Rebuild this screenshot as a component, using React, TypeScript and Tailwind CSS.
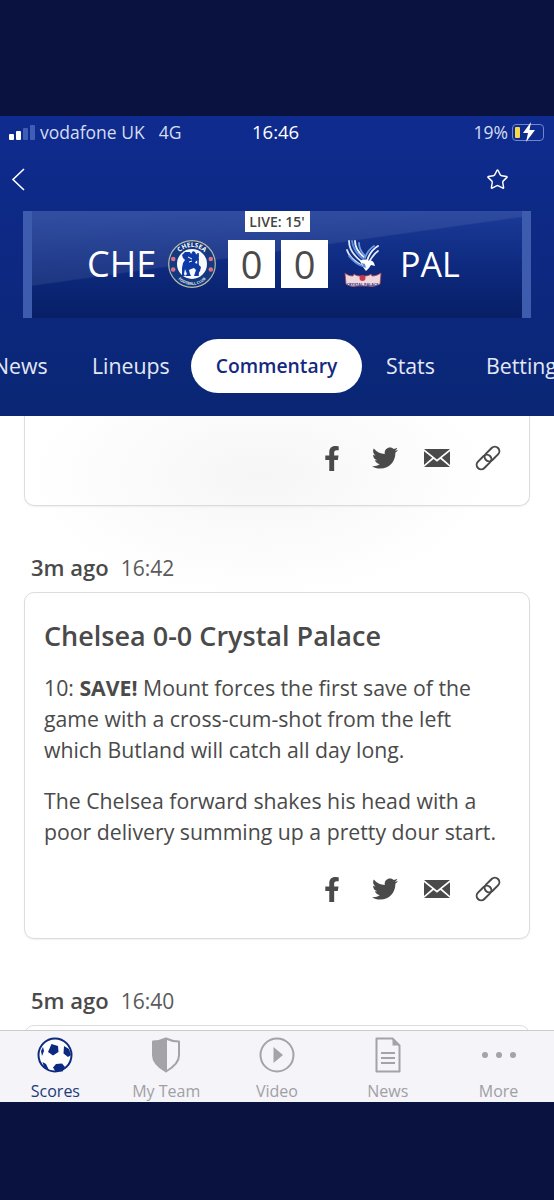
import { FaFacebookF, FaTwitter } from "react-icons/fa";
import { Star } from "lucide-react";

const sans = "font-['Open_Sans','Noto_Sans',sans-serif]";

function Share() {
  return (
    <div className="flex items-center justify-end gap-[25px] pr-[28px] text-[#4a4a4a]">
      <FaFacebookF className="w-[24px] h-[25px] mr-[3px]" />
      <FaTwitter className="w-[26px] h-[26px] mr-[1px]" />
      <svg width="26" height="18" viewBox="0 0 26 18" className="shrink-0">
        <path fill="currentColor" d="M0 0h26L13 10.500zM0 2.200V16l8.200-7.200zM26 2.200V16l-8.200-7.200zM9.600 10l3.400 2.800 3.400-2.800L26 18H0z" />
      </svg>
      <svg width="26" height="26" viewBox="0 0 26 26" className="shrink-0" fill="none" stroke="currentColor" strokeWidth="2">
        <rect x="-8.500" y="-4.500" width="17" height="9" rx="4.500" transform="translate(9 17) rotate(-45)" />
        <rect x="-8.500" y="-4.500" width="17" height="9" rx="4.500" transform="translate(17 9) rotate(-45)" />
      </svg>
    </div>
  );
}

function Chelsea() {
  return (
    <svg width="48" height="48" viewBox="0 0 48 48" className="shrink-0">
      <defs>
        <path id="che-top" d="M7 24a17 17 0 0 1 34 0" />
        <path id="che-bot" d="M5 26a19 19 0 0 0 38 0" />
      </defs>
      <circle cx="24" cy="24" r="23.300" fill="#15397f" stroke="#b9bba6" strokeWidth="1.200" />
      <circle cx="24" cy="24" r="15" fill="#f7f9fd" />
      <text fontSize="6.400" fontWeight="700" fill="#fff" textAnchor="middle" fontFamily="Open Sans">
        <textPath href="#che-top" startOffset="50%">CHELSEA</textPath>
      </text>
      <text fontSize="3.800" fontWeight="700" fill="#e6ebf7" textAnchor="middle" fontFamily="Open Sans">
        <textPath href="#che-bot" startOffset="50%">FOOTBALL CLUB</textPath>
      </text>
      <circle cx="5.200" cy="19" r="2.300" fill="#d9708a" />
      <circle cx="5.200" cy="29.500" r="2.300" fill="#d9708a" />
      <circle cx="42.800" cy="19" r="2.300" fill="#d9708a" />
      <circle cx="42.800" cy="29.500" r="2.300" fill="#d9708a" />
      <path fill="#0d3aa5" d="M17 12h5l1 2 2-3 2 1 1 2 3 1-1 3 1 2-3 1-1 2 3 1 3 3-1 4-2 3 1 2h-5l1-3 1-3-2-2-3 1-2 1 1 4 1 2h-6l2-2-2-5-1 5 1 2h-3v-8l1-5 2-3-2-2-1-3z" />
      <path stroke="#0d3aa5" strokeWidth="1.600" fill="none" d="M30 13v22" />
      <path stroke="#fff" strokeWidth="1" fill="none" d="M20 17l4 2M21 22l3-1" />
    </svg>
  );
}

function Palace() {
  return (
    <svg width="38" height="52" viewBox="0 0 38 52" className="shrink-0">
      <g fill="none" strokeLinecap="round" strokeWidth="1.800">
        <path stroke="#dce8fb" d="M5 3c0 8 5 15 13 21" />
        <path stroke="#5f8edb" d="M8 3c1 7 5 13 11 18" />
        <path stroke="#eef4fd" d="M11 3c0 6 4 12 9 16" />
        <path stroke="#6f9ae0" d="M15 5c0 5 3 10 6 13" />
        <path stroke="#dce8fb" d="M3 12c2 6 7 11 14 15" />
        <path stroke="#5f8edb" d="M5 18c3 4 7 8 13 10" />
        <path stroke="#eef4fd" d="M34 8c-5 3-9 8-11 15" />
        <path stroke="#6f9ae0" d="M30 8c-3 2-7 6-9 12" />
        <path stroke="#dce8fb" d="M34 13c-3 2-6 6-9 11" />
      </g>
      <path fill="#ffffff" d="M16 23c3-2 7-2 9 0 2-1 4 0 5 2l1 3-4-1-2 3-3 3-3-4z" />
      <path fill="#5f8edb" d="M18 25l3 1 1 4-3-1z" />
      <path fill="#f0d7db" stroke="#a84458" strokeWidth="0.800" d="M1 35c2 2 5 3 8 3l1-2c3 3 14 3 17 0l1 2c3 0 6-1 9-3l-1 11c-3 2-8 3-12 2H13c-4 1-9 0-11-2z" />
      <circle cx="18.500" cy="40" r="3" fill="#c7374a" />
      <text x="18.500" y="47.500" textAnchor="middle" fontSize="3.800" fontWeight="700" fill="#23408f" fontFamily="Open Sans">CRYSTAL PALACE</text>
    </svg>
  );
}

function Ball() {
  return (
    <svg width="36" height="36" viewBox="0 0 36 36">
      <circle cx="18" cy="18" r="16.500" fill="#fff" stroke="#0b2a80" strokeWidth="2" />
      <path fill="#0b2a80" d="M14.500 7l6.500 2 .5 6-5.500 3.500-5-3.500zM19 27l6-.5 3 3.500-2.500 4.500h-7l-2.500-4zM27 9l5 3 2 6-3 2-4.500-3.500zM4 14l2-4 1 4-2 5zM5.500 25l3.500 2 3 6-5-3z" />
    </svg>
  );
}

function ShieldIcon() {
  return (
    <svg width="30" height="36" viewBox="0 0 30 36">
      <path fill="#a4a4a8" stroke="#a4a4a8" strokeWidth="2" strokeLinejoin="round" d="M15 1.500C11 3.500 6 4.500 2 4.500v14c0 7 6 12 13 16z" />
      <path fill="none" stroke="#a4a4a8" strokeWidth="2" strokeLinejoin="round" d="M15 1.500c4 2 9 3 13 3v14c0 7-6 12-13 16" />
    </svg>
  );
}

function PlayIcon() {
  return (
    <svg width="36" height="36" viewBox="0 0 36 36">
      <circle cx="18" cy="18" r="16.500" fill="none" stroke="#a4a4a8" strokeWidth="2" />
      <path fill="#a4a4a8" d="M14.500 10l9.500 8-9.500 8z" />
    </svg>
  );
}

function FileIcon() {
  return (
    <svg width="26" height="36" viewBox="0 0 26 36">
      <path fill="none" stroke="#a4a4a8" strokeWidth="2" strokeLinejoin="round" d="M1.500 1.500h16l7 7v26h-23z" />
      <path fill="#a4a4a8" d="M17.500 1.500l7 7h-7zM6 15h14v2H6zM6 20h14v2H6zM6 25h14v2H6z" />
    </svg>
  );
}

function DotsIcon() {
  return (
    <svg width="36" height="36" viewBox="0 0 36 36">
      <circle cx="4" cy="18" r="3" fill="#a4a4a8" />
      <circle cx="18" cy="18" r="3" fill="#a4a4a8" />
      <circle cx="32" cy="18" r="3" fill="#a4a4a8" />
    </svg>
  );
}

function TabItem({ label, active, children }: { label: string; active?: boolean; children: React.ReactNode }) {
  return (
    <div className="flex-1 flex flex-col items-center">
      <div className="h-[38px] flex items-center justify-center">{children}</div>
      <span className={`text-[16px] leading-[20px] mt-[7px] ${active ? "text-[#1d3a78]" : "text-[#a0a0a4]"}`}>{label}</span>
    </div>
  );
}

export default function App() {
  return (
    <div className={`w-[554px] h-[1200px] bg-[#0a1240] flex flex-col overflow-hidden ${sans}`}>
      <div className="h-[116px] shrink-0 bg-[#0a1240]" />
      <div className="h-[986px] shrink-0 flex flex-col bg-white">
        <header className="h-[300px] shrink-0 bg-gradient-to-b from-[#0f2b8f] to-[#0a2674] text-white flex flex-col overflow-hidden">
          <div className="h-[30px] mt-[1px] relative flex items-center pl-[9px] pr-[10px] text-[17.500px]">
            <div className="flex items-end gap-[2px] h-[15px]">
              <span className="w-[5px] h-[6px] rounded-[1px] bg-white" />
              <span className="w-[5px] h-[9px] rounded-[1px] bg-white" />
              <span className="w-[5px] h-[12px] rounded-[1px] bg-[#3f5fb5]" />
              <span className="w-[5px] h-[15px] rounded-[1px] bg-[#3f5fb5]" />
            </div>
            <span className="ml-[5px] text-[#d5ddf2]">vodafone UK</span>
            <span className="ml-[14px] text-[#d5ddf2]">4G</span>
            <span className="absolute left-[252px] font-medium text-[18.500px]">16:46</span>
            <span className="ml-auto text-[#d5ddf2]">19%</span>
            <span className="ml-[4px] relative w-[32px] h-[17px] rounded-[4px] border border-[#6f86d0] flex items-center pl-[2px]">
              <span className="w-[5px] h-[11px] rounded-[1px] bg-[#f4d94a]" />
              <svg width="14" height="20" viewBox="0 0 14 20" className="absolute left-[9px] -top-[3px]">
                <path fill="#fff" d="M9 0L1 11h5l-2 9 9-12H7.500z" />
              </svg>
            </span>
          </div>
          <div className="h-[54px] mt-[5px] flex items-center justify-between pl-[11px] pr-[45px]">
            <svg width="14" height="24" viewBox="0 0 14 24">
              <path d="M13 2L2 12.500 13 23" fill="none" stroke="#fff" strokeWidth="1.600" />
            </svg>
            <Star className="w-[23px] h-[23px]" strokeWidth={1.5} />
          </div>
          <div className="relative mx-[23px] h-[107px] mt-[5px] bg-gradient-to-b from-[#1b3b98] via-[#0e2a80] to-[#081f66] border-x-[9px] border-[#3d5cae] flex flex-col items-center overflow-hidden">
            <div className="absolute inset-0 bg-[linear-gradient(172deg,rgba(255,255,255,0.1)_0%,rgba(255,255,255,0.08)_42%,transparent_43%)]" />
            <div className="relative h-[21px] w-[65px] bg-white text-[#444] text-[14px] font-semibold leading-[21px] text-center whitespace-nowrap">LIVE: 15'</div>
            <div className="relative flex items-center mt-[8px] h-[48px] mr-[9px]">
              <span className="text-[36px] font-medium mr-[12px] w-[69px] whitespace-nowrap">CHE</span>
              <Chelsea />
              <div className="ml-[12px] w-[47px] h-[48px] bg-white text-[#4a4a4a] text-[38px] font-medium flex items-center justify-center">0</div>
              <div className="ml-[6px] w-[47px] h-[48px] bg-white text-[#4a4a4a] text-[38px] font-medium flex items-center justify-center">0</div>
              <div className="ml-[16px]"><Palace /></div>
              <span className="text-[34px] font-medium ml-[18px] w-[58px] whitespace-nowrap">PAL</span>
            </div>
          </div>
          <div className="flex items-center h-[54px] mt-[21px] -ml-[7px] whitespace-nowrap text-[21.300px] text-[#e3e8f6]">
            <span className="w-[56px] shrink-0">News</span>
            <span className="ml-[43px] w-[78px] shrink-0">Lineups</span>
            <span className="ml-[21px] w-[171px] shrink-0 h-[54px] rounded-[27px] bg-white text-[#14297f] text-[19.300px] font-semibold flex items-center justify-center">Commentary</span>
            <span className="ml-[24px] w-[53px] shrink-0">Stats</span>
            <span className="ml-[47px] shrink-0">Betting</span>
          </div>
        </header>

        <main className="flex-1 overflow-hidden px-[24px] text-[#4a4a4a] text-[21.250px] leading-[31px] bg-[radial-gradient(ellipse_230px_120px_at_260px_60px,#f6f6f6,#ffffff)]">
          <div className="h-[90px] border-x border-b border-[#dcdcdc] rounded-b-[10px] shadow-[0_1px_2px_rgba(0,0,0,0.06)] pt-[29px]">
            <Share />
          </div>
          <div className="mt-[46px] pl-[7px] flex items-baseline gap-[12px]">
            <span className="text-[22px] font-semibold">3m ago</span>
            <span className="text-[21px] text-[#5a5a5a]">16:42</span>
          </div>
          <section className="mt-[8px] h-[347px] bg-white border border-[#dcdcdc] rounded-[10px] shadow-[0_1px_2px_rgba(0,0,0,0.06)] pl-[19px] pr-[28px] pt-[25px]">
            <h2 className="text-[27px] leading-[36px] font-semibold whitespace-nowrap">Chelsea 0-0 Crystal Palace</h2>
            <p className="mt-[18px]">10: <b>SAVE!</b> Mount forces the first save of the game with a cross-cum-shot from the left which Butland will catch all day long.</p>
            <p className="mt-[20px]">The Chelsea forward shakes his head with a poor delivery summing up a pretty dour start.</p>
            <div className="mt-[29px] -mr-[28px]"><Share /></div>
          </section>
          <div className="mt-[46px] pl-[7px] flex items-baseline gap-[12px]">
            <span className="text-[22px] font-semibold">5m ago</span>
            <span className="text-[21px] text-[#5a5a5a]">16:40</span>
          </div>
          <div className="mt-[8px] h-[40px] border border-[#dcdcdc] rounded-t-[10px]" />
        </main>

        <nav className="h-[72px] shrink-0 bg-[#f4f4f9] border-t border-[#c9c9cf] flex pt-[5px]">
          <TabItem label="Scores" active><Ball /></TabItem>
          <TabItem label="My Team"><ShieldIcon /></TabItem>
          <TabItem label="Video"><PlayIcon /></TabItem>
          <TabItem label="News"><FileIcon /></TabItem>
          <TabItem label="More"><DotsIcon /></TabItem>
        </nav>
      </div>
    </div>
  );
}
